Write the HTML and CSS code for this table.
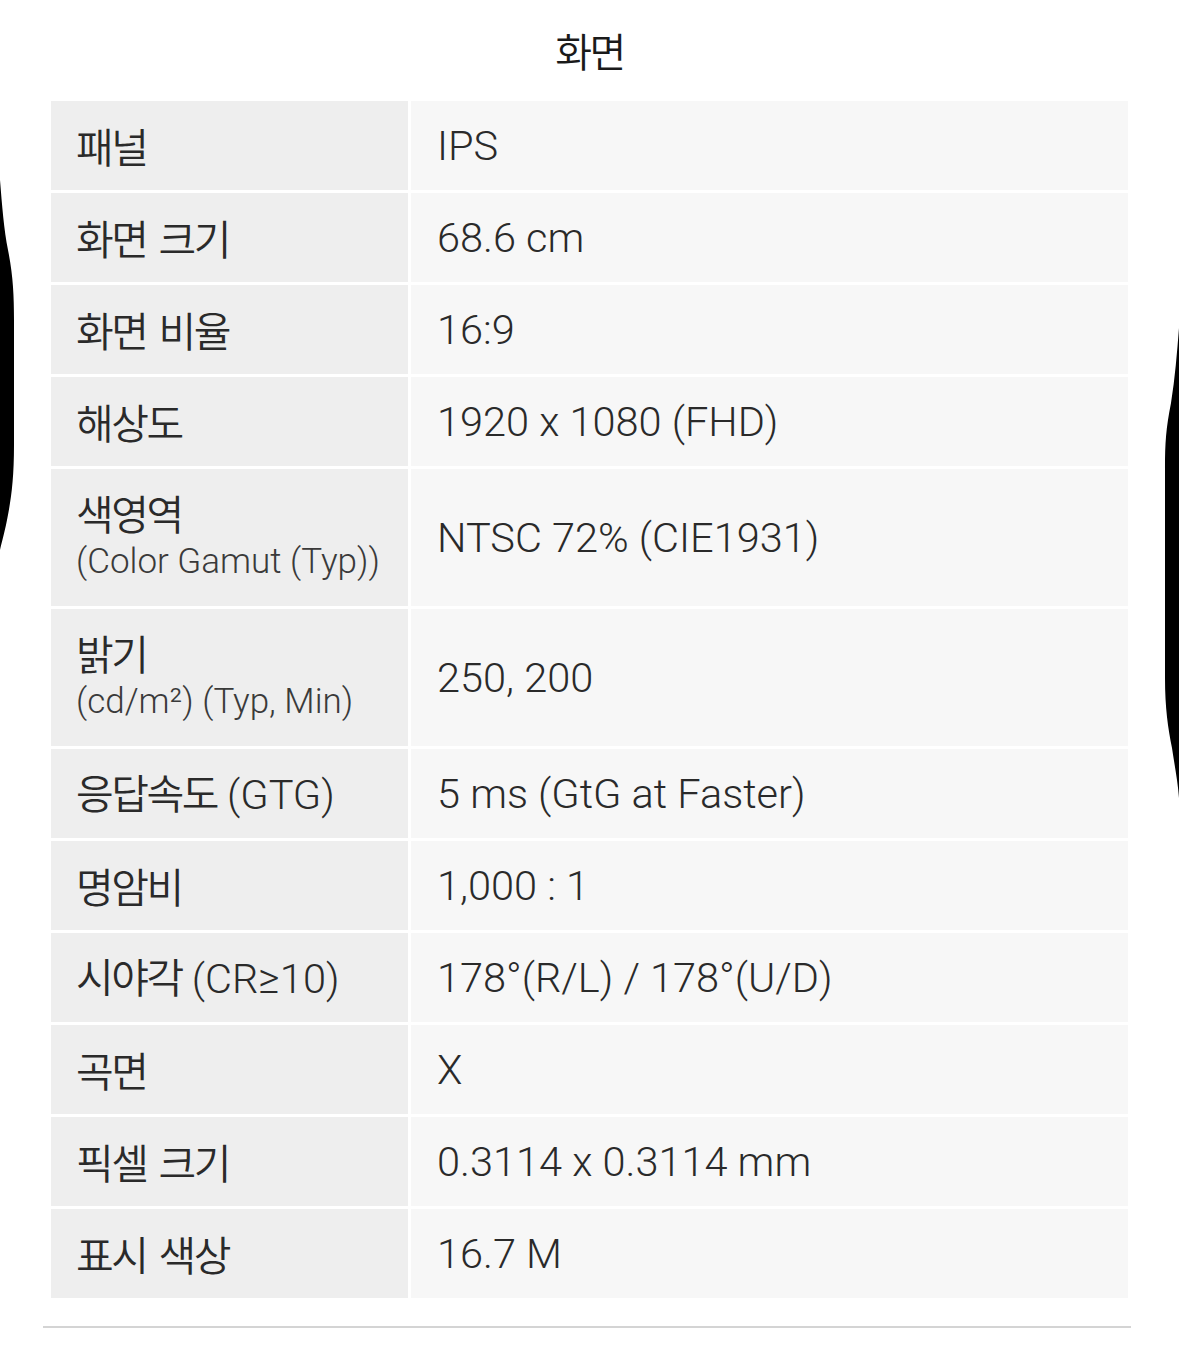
FILE: index.html
```html
<!DOCTYPE html>
<html lang="ko">
<head>
<meta charset="utf-8">
<title>화면</title>
<link rel="stylesheet" href="styles.css">
</head>
<body>
<main class="page">
  <h2 class="title"><span class="ko">화면</span></h2>
  <div class="spec">
    <div class="label"><span class="ko">패널</span></div>
    <div class="value">IPS</div>

    <div class="label"><span class="ko">화면 크기</span></div>
    <div class="value">68.6 cm</div>

    <div class="label"><span class="ko">화면 비율</span></div>
    <div class="value">16:9</div>

    <div class="label"><span class="ko">해상도</span></div>
    <div class="value">1920 x 1080 (FHD)</div>

    <div class="label"><span class="ko">색영역</span><span class="sub">(Color Gamut (Typ))</span></div>
    <div class="value">NTSC 72% (CIE1931)</div>

    <div class="label"><span class="ko">밝기</span><span class="sub">(cd/m²) (Typ, Min)</span></div>
    <div class="value">250, 200</div>

    <div class="label"><span><span class="ko">응답속도</span> (GTG)</span></div>
    <div class="value">5 ms (GtG at Faster)</div>

    <div class="label"><span class="ko">명암비</span></div>
    <div class="value">1,000 : 1</div>

    <div class="label"><span><span class="ko">시야각</span> (CR≥10)</span></div>
    <div class="value">178°(R/L) / 178°(U/D)</div>

    <div class="label"><span class="ko">곡면</span></div>
    <div class="value">X</div>

    <div class="label"><span class="ko">픽셀 크기</span></div>
    <div class="value">0.3114 x 0.3114 mm</div>

    <div class="label"><span class="ko">표시 색상</span></div>
    <div class="value">16.7 M</div>
  </div>
  <div class="divider"></div>
</main>
<svg class="edge edge-left" width="16" height="370" viewBox="0 0 16 370" aria-hidden="true">
  <path d="M0,0 C2,25 4,50 8,70 C13,95 14,115 14,140 L14,265 C14,300 11,320 7,340 C4,355 1,365 0,370 Z" fill="#000"/>
</svg>
<svg class="edge edge-right" width="16" height="470" viewBox="0 0 16 470" aria-hidden="true">
  <path d="M16,0 C14,25 12,50 8,75 C3,100 2,115 2,140 L2,350 C2,380 5,400 9,420 C12,440 15,455 16,470 Z" fill="#000"/>
</svg>
</body>
</html>
```
FILE: styles.css
```css
html, body {
  margin: 0;
  padding: 0;
  background: #ffffff;
}

body {
  font-family: Roboto, "Noto Sans CJK KR", sans-serif;
  color: #2a2a2a;
  width: 1179px;
  height: 1364px;
  overflow: hidden;
  position: relative;
}

.page {
  display: flex;
  flex-direction: column;
  align-items: center;
}

.ko {
  font-family: "Noto Sans CJK KR", sans-serif;
  font-weight: 350;
  letter-spacing: -2.5px;
  word-spacing: 3px;
}

.title {
  margin: 0;
  height: 101px;
  display: flex;
  align-items: center;
  justify-content: center;
  font-size: 40px;
  font-weight: 350;
  color: #1a1a1a;
  padding-bottom: 2px;
  box-sizing: border-box;
}

.spec {
  display: grid;
  grid-template-columns: 357px 717px;
  grid-template-rows: repeat(4, 89px) 137px 137px repeat(6, 89px);
  gap: 3px;
  width: 1077px;
}

.label,
.value {
  display: flex;
  flex-direction: column;
  justify-content: center;
  font-size: 41.5px;
  font-weight: 300;
  line-height: 1.2;
}

.label {
  background: #eeeeee;
  padding-left: 25px;
}

.value {
  background: #f7f7f7;
  padding-left: 26px;
}

.label .ko {
  font-size: 41px;
}

.sub {
  font-size: 35px;
  line-height: 1.45;
  color: #3a3a3a;
}

.divider {
  width: 1088px;
  height: 2px;
  background: #d4d4d4;
  margin-top: 28px;
  margin-left: -6px;
}

.edge {
  position: absolute;
}

.edge-left {
  left: 0;
  top: 180px;
}

.edge-right {
  right: 0;
  top: 328px;
}
```
